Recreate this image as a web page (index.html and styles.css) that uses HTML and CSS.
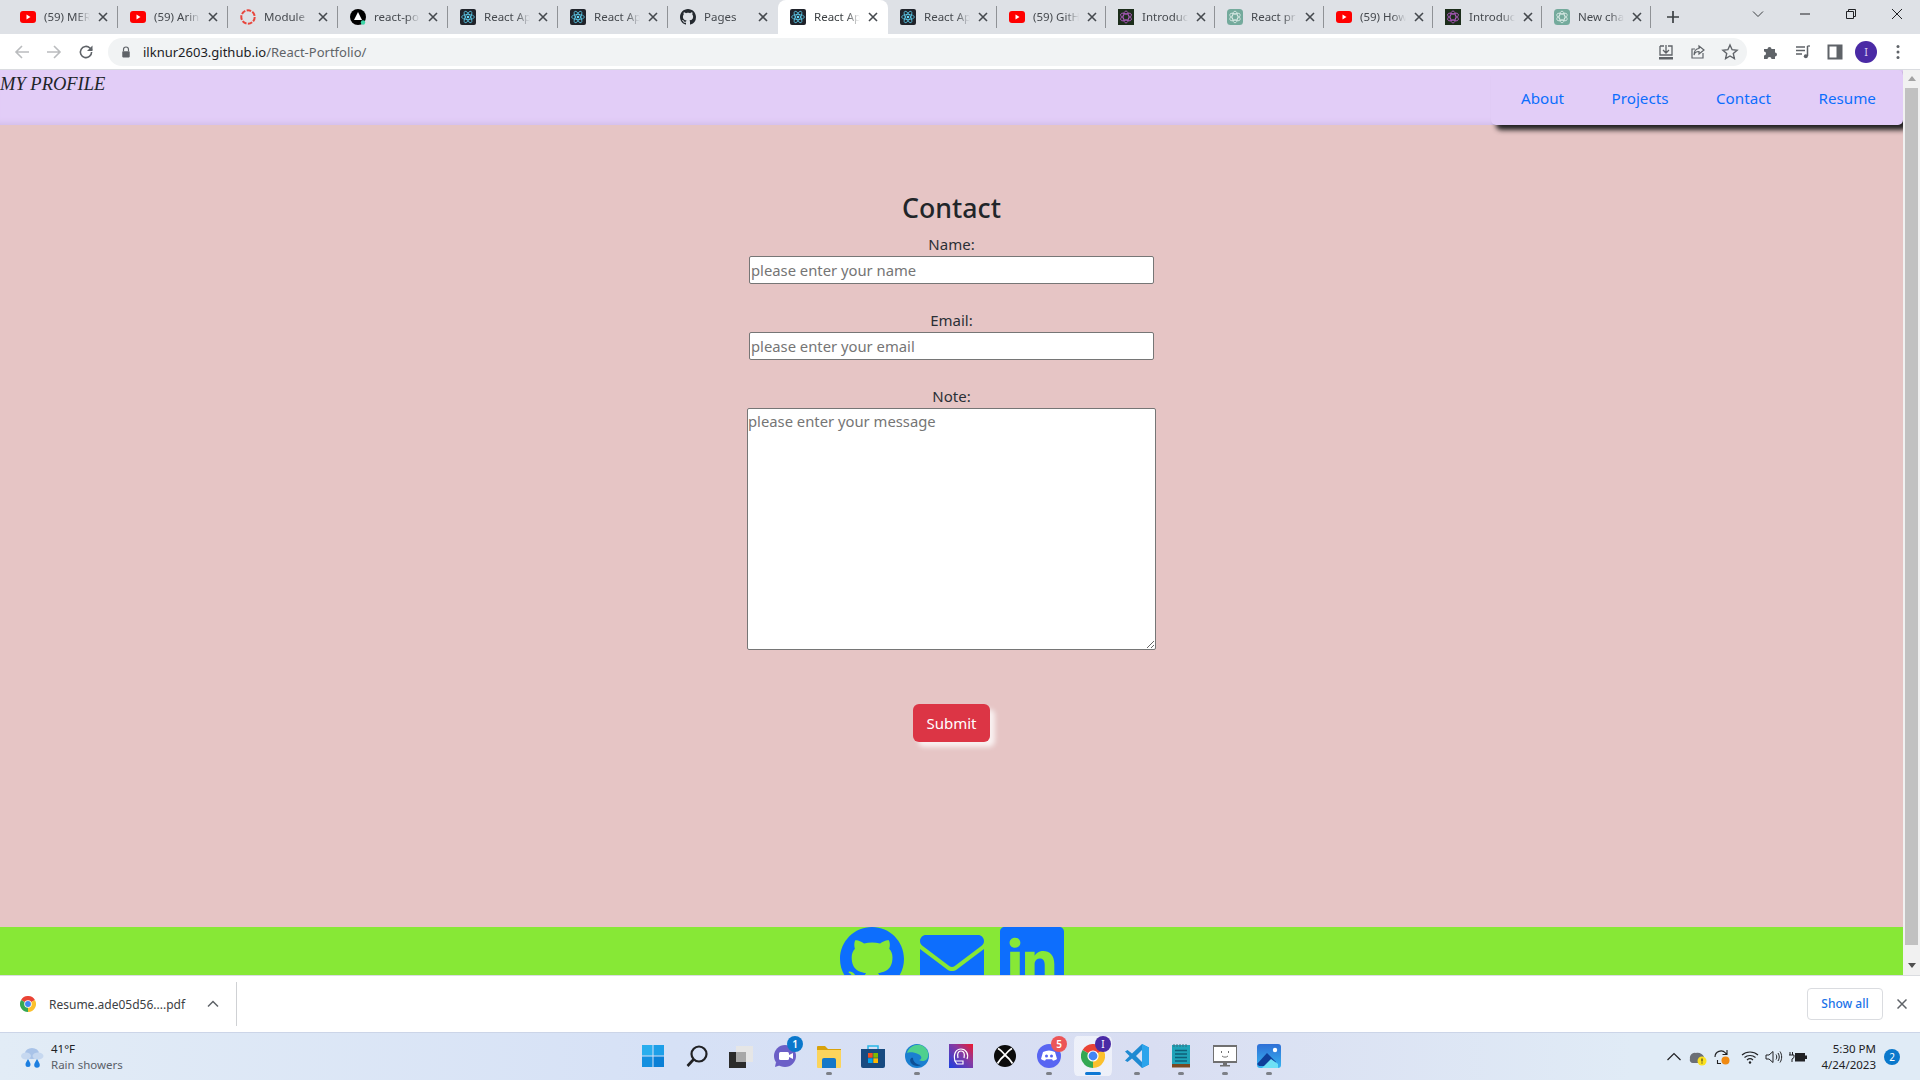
FILE: index.html
```html
<!DOCTYPE html>
<html lang="en">
<head>
<meta charset="utf-8">
<title>React App</title>
<link rel="stylesheet" href="styles.css">
</head>
<body>
<svg class="sprite" xmlns="http://www.w3.org/2000/svg">
  <symbol id="i-x" viewBox="0 0 10 10"><path d="M1 1l8 8M9 1L1 9" fill="none" stroke="currentColor" stroke-width="1.6"/></symbol>
  <symbol id="f-yt" viewBox="0 0 16 16"><rect y="2" width="16" height="12" rx="3" fill="#f00"/><path d="M6.5 5.5v5l4-2.5z" fill="#fff"/></symbol>
  <symbol id="f-module" viewBox="0 0 16 16"><circle cx="8" cy="8" r="6.7" fill="none" stroke="#e8453c" stroke-width="2" stroke-dasharray="4.6 1.4"/></symbol>
  <symbol id="f-render" viewBox="0 0 16 16"><circle cx="8" cy="8" r="8" fill="#000"/><path d="M8 3l4 8H4z" fill="#fff"/><circle cx="13" cy="13.5" r="2.2" fill="#3fd6a8"/></symbol>
  <symbol id="f-react" viewBox="0 0 16 16"><rect width="16" height="16" rx="2" fill="#20232a"/><g fill="none" stroke="#61dafb" stroke-width=".7"><ellipse cx="8" cy="8" rx="6.4" ry="2.5"/><ellipse cx="8" cy="8" rx="6.4" ry="2.5" transform="rotate(60 8 8)"/><ellipse cx="8" cy="8" rx="6.4" ry="2.5" transform="rotate(120 8 8)"/></g><circle cx="8" cy="8" r="1.3" fill="#61dafb"/></symbol>
  <symbol id="bi-github" viewBox="0 0 16 16"><path d="M8 0C3.58 0 0 3.58 0 8c0 3.54 2.29 6.53 5.47 7.59.4.07.55-.17.55-.38 0-.19-.01-.82-.01-1.49-2.01.37-2.53-.49-2.69-.94-.09-.23-.48-.94-.82-1.13-.28-.15-.68-.52-.01-.53.63-.01 1.08.58 1.23.82.72 1.21 1.87.87 2.33.66.07-.52.28-.87.51-1.07-1.78-.2-3.64-.89-3.64-3.95 0-.87.31-1.59.82-2.15-.08-.2-.36-1.02.08-2.12 0 0 .67-.21 2.2.82.64-.18 1.32-.27 2-.27.68 0 1.36.09 2 .27 1.53-1.04 2.2-.82 2.2-.82.44 1.1.16 1.92.08 2.12.51.56.82 1.27.82 2.15 0 3.07-1.87 3.75-3.65 3.95.29.25.54.73.54 1.48 0 1.07-.01 1.93-.01 2.2 0 .21.15.46.55.38A8.012 8.012 0 0 0 16 8c0-4.42-3.58-8-8-8z"/></symbol>
  <symbol id="f-ai" viewBox="0 0 16 16"><rect width="16" height="16" fill="#1c2d1b"/><g fill="none" stroke="#b65cc8" stroke-width=".8"><ellipse cx="8" cy="8" rx="6" ry="2.800" transform="rotate(30 8 8)"/><ellipse cx="8" cy="8" rx="6" ry="2.800" transform="rotate(90 8 8)"/><ellipse cx="8" cy="8" rx="6" ry="2.800" transform="rotate(150 8 8)"/></g></symbol>
  <symbol id="f-gpt" viewBox="0 0 16 16"><rect width="16" height="16" rx="3.500" fill="#74aa9c"/><g fill="none" stroke="#e8f3f0" stroke-width=".7"><ellipse cx="8" cy="8" rx="5.800" ry="2.800" transform="rotate(30 8 8)"/><ellipse cx="8" cy="8" rx="5.800" ry="2.800" transform="rotate(90 8 8)"/><ellipse cx="8" cy="8" rx="5.800" ry="2.800" transform="rotate(150 8 8)"/></g></symbol>
  <symbol id="chrome" viewBox="0 0 24 24"><path d="M12 12L1.6 6A12 12 0 0 1 22.4 6z" fill="#ea4335"/><path d="M12 12L22.4 6A12 12 0 0 1 12 24z" fill="#fbc02d"/><path d="M12 12L12 24A12 12 0 0 1 1.6 6z" fill="#34a853"/><circle cx="12" cy="12" r="5.6" fill="#fff"/><circle cx="12" cy="12" r="4.4" fill="#4285f4"/></symbol>
</svg>

<div class="tabstrip">
  <div class="tab"><svg class="favicon"><use href="#f-yt"/></svg><span class="tab-title">(59) MER</span><svg class="tab-x"><use href="#i-x"/></svg></div>
  <div class="tab"><svg class="favicon"><use href="#f-yt"/></svg><span class="tab-title">(59) Arin</span><svg class="tab-x"><use href="#i-x"/></svg></div>
  <div class="tab"><svg class="favicon"><use href="#f-module"/></svg><span class="tab-title">Module</span><svg class="tab-x"><use href="#i-x"/></svg></div>
  <div class="tab"><svg class="favicon"><use href="#f-render"/></svg><span class="tab-title">react-po</span><svg class="tab-x"><use href="#i-x"/></svg></div>
  <div class="tab"><svg class="favicon"><use href="#f-react"/></svg><span class="tab-title">React Ap</span><svg class="tab-x"><use href="#i-x"/></svg></div>
  <div class="tab"><svg class="favicon"><use href="#f-react"/></svg><span class="tab-title">React Ap</span><svg class="tab-x"><use href="#i-x"/></svg></div>
  <div class="tab tab-plain"><svg class="favicon fav-dark"><use href="#bi-github"/></svg><span class="tab-title">Pages</span><svg class="tab-x"><use href="#i-x"/></svg></div>
  <div class="tab tab-active"><svg class="favicon"><use href="#f-react"/></svg><span class="tab-title">React Ap</span><svg class="tab-x"><use href="#i-x"/></svg></div>
  <div class="tab tab-narrow"><svg class="favicon"><use href="#f-react"/></svg><span class="tab-title">React Ap</span><svg class="tab-x"><use href="#i-x"/></svg></div>
  <div class="tab tab-narrow"><svg class="favicon"><use href="#f-yt"/></svg><span class="tab-title">(59) GitH</span><svg class="tab-x"><use href="#i-x"/></svg></div>
  <div class="tab tab-narrow"><svg class="favicon"><use href="#f-ai"/></svg><span class="tab-title">Introduc</span><svg class="tab-x"><use href="#i-x"/></svg></div>
  <div class="tab tab-narrow"><svg class="favicon"><use href="#f-gpt"/></svg><span class="tab-title">React pr</span><svg class="tab-x"><use href="#i-x"/></svg></div>
  <div class="tab tab-narrow"><svg class="favicon"><use href="#f-yt"/></svg><span class="tab-title">(59) How</span><svg class="tab-x"><use href="#i-x"/></svg></div>
  <div class="tab tab-narrow"><svg class="favicon"><use href="#f-ai"/></svg><span class="tab-title">Introduc</span><svg class="tab-x"><use href="#i-x"/></svg></div>
  <div class="tab tab-narrow"><svg class="favicon"><use href="#f-gpt"/></svg><span class="tab-title">New cha</span><svg class="tab-x"><use href="#i-x"/></svg></div>
  <svg class="new-tab" viewBox="0 0 12 12"><path d="M6 0v12M0 6h12" fill="none" stroke="#3c4043" stroke-width="1.7"/></svg>
  <div class="window-controls">
    <svg class="win-btn win-chevron" viewBox="0 0 12 12"><path d="M1 3.5l5 5 5-5" fill="none" stroke="#3c4043" stroke-width="1"/></svg>
    <svg class="win-btn win-min" viewBox="0 0 12 12"><path d="M1 6h10" fill="none" stroke="#202124" stroke-width="1"/></svg>
    <svg class="win-btn win-max" viewBox="0 0 12 12"><path d="M1.5 3.5h7v7h-7zM3.5 3.5v-2h7v7h-2" fill="none" stroke="#202124" stroke-width="1"/></svg>
    <svg class="win-btn win-close" viewBox="0 0 12 12"><path d="M1 1l10 10M11 1L1 11" fill="none" stroke="#202124" stroke-width="1"/></svg>
  </div>
</div>

<div class="toolbar">
  <svg class="tool-icon" viewBox="0 0 16 16"><path d="M15 8H2M8 2L2 8l6 6" fill="none" stroke="#babcbe" stroke-width="1.6"/></svg>
  <svg class="tool-icon" viewBox="0 0 16 16"><path d="M1 8h13M8 2l6 6-6 6" fill="none" stroke="#babcbe" stroke-width="1.6"/></svg>
  <svg class="tool-icon" viewBox="0 0 16 16"><path d="M13.6 8a5.6 5.6 0 1 1-1.7-4L14 6" fill="none" stroke="#5f6368" stroke-width="1.6"/><path d="M14.5 1.5V7H9z" fill="#5f6368"/></svg>
  <div class="omnibox">
    <svg class="lock" viewBox="0 0 12 14"><path d="M3 6V4a3 3 0 0 1 6 0v2" fill="none" stroke="#5f6368" stroke-width="1.4"/><rect x="1.5" y="6" width="9" height="7.5" rx="1" fill="#5f6368"/></svg>
    <span class="url"><span class="url-host">ilknur2603.github.io</span>/React-Portfolio/</span>
    <div class="omni-actions">
      <svg class="omni-icon" viewBox="0 0 18 18"><path d="M3 3h4M11 3h4v9H3V3M9 2v7M6 7l3 3 3-3" fill="none" stroke="#5f6368" stroke-width="1.3"/><path d="M2 14h14v2.5H2z" fill="#5f6368"/></svg>
      <svg class="omni-icon" viewBox="0 0 18 18"><path d="M14 10v5H3V6h3M10 3l5 4-5 4V8.5C7 8.500 5.500 10 5 12c0-4 2-6.500 5-6.500z" fill="none" stroke="#5f6368" stroke-width="1.2"/></svg>
      <svg class="omni-icon" viewBox="0 0 18 18"><path d="M9 2l2.100 4.700 5 .5-3.800 3.400 1.100 5L9 13l-4.400 2.600 1.100-5L1.900 7.200l5-.5z" fill="none" stroke="#5f6368" stroke-width="1.400"/></svg>
    </div>
  </div>
  <div class="tool-right">
    <svg class="tool-icon" viewBox="0 0 16 16"><path d="M1 5h3.500a2 2 0 1 1 4 0H12v3.500a2 2 0 1 1 0 4V15H8.500a2 2 0 1 0-4 0H1v-3.500a2 2 0 1 0 0-4z" fill="#5f6368"/></svg>
    <svg class="tool-icon" viewBox="0 0 16 16"><path d="M1 3h9M1 6.500h9M1 10h6" fill="none" stroke="#5f6368" stroke-width="1.300"/><path d="M12.500 2v10" fill="none" stroke="#5f6368" stroke-width="1.500"/><path d="M12.500 2h2.500" fill="none" stroke="#5f6368" stroke-width="1.300"/><circle cx="10.800" cy="12.200" r="2" fill="#5f6368"/></svg>
    <svg class="tool-icon" viewBox="0 0 16 16"><path d="M1.500 1.500h13v13h-13z" fill="none" stroke="#5f6368" stroke-width="2"/><path d="M9.500 1.500h5v13h-5z" fill="#5f6368"/></svg>
    <span class="avatar">I</span>
    <svg class="kebab" viewBox="0 0 4 16"><circle cx="2" cy="2.500" r="1.500" fill="#5f6368"/><circle cx="2" cy="8" r="1.500" fill="#5f6368"/><circle cx="2" cy="13.500" r="1.500" fill="#5f6368"/></svg>
  </div>
</div>

<div class="viewport">
  <div class="page">
    <header class="navbar">
      <a class="brand">MY PROFILE</a>
      <nav class="nav-links">
        <a class="nav-link">About</a>
        <a class="nav-link">Projects</a>
        <a class="nav-link">Contact</a>
        <a class="nav-link">Resume</a>
      </nav>
    </header>
    <main class="content">
      <h2 class="title">Contact</h2>
      <form class="contact-form">
        <label class="field-label" for="name">Name:</label>
        <input class="field-input" id="name" type="text" placeholder="please enter your name">
        <label class="field-label" for="email">Email:</label>
        <input class="field-input" id="email" type="text" placeholder="please enter your email">
        <label class="field-label" for="note">Note:</label>
        <textarea class="field-area" id="note" placeholder="please enter your message"></textarea>
        <button class="submit" type="button">Submit</button>
      </form>
    </main>
    <footer class="footer">
      <svg class="social" viewBox="0 0 16 16"><use href="#bi-github"/></svg>
      <svg class="social" viewBox="0 0 512 512"><path d="M48 64C21.500 64 0 85.500 0 112c0 15.100 7.100 29.300 19.200 38.400L236.800 313.600c11.400 8.500 27 8.500 38.400 0L492.800 150.400c12.100-9.100 19.200-23.300 19.200-38.400c0-26.500-21.500-48-48-48H48zM0 176V384c0 35.300 28.700 64 64 64H448c35.300 0 64-28.700 64-64V176L294.400 339.200c-22.800 17.100-54 17.100-76.800 0L0 176z"/></svg>
      <svg class="social" viewBox="0 0 16 16"><path d="M0 1.146C0 .513.526 0 1.175 0h13.650C15.474 0 16 .513 16 1.146v13.708c0 .633-.526 1.146-1.175 1.146H1.175C.526 16 0 15.487 0 14.854V1.146zm4.943 12.248V6.169H2.542v7.225h2.401zm-1.200-8.212c.837 0 1.358-.554 1.358-1.248-.015-.709-.52-1.248-1.342-1.248-.822 0-1.359.54-1.359 1.248 0 .694.521 1.248 1.327 1.248h.016zm4.908 8.212V9.359c0-.216.016-.432.08-.586.173-.431.568-.878 1.232-.878.869 0 1.216.662 1.216 1.634v3.865h2.401V9.250c0-2.220-1.184-3.252-2.764-3.252-1.274 0-1.845.7-2.165 1.193v.025h-.016a5.540 5.540 0 0 1 .016-.025V6.169h-2.400c.03.678 0 7.225 0 7.225h2.400z"/></svg>
    </footer>
  </div>
  <div class="scrollbar">
    <span class="arrow-up"></span>
    <span class="thumb"></span>
    <span class="arrow-down"></span>
  </div>
</div>

<div class="download-bar">
  <svg class="dl-icon"><use href="#chrome"/></svg>
  <span class="dl-name">Resume.ade05d56....pdf</span>
  <svg class="dl-chevron" viewBox="0 0 12 8"><path d="M1 6.500l5-5 5 5" fill="none" stroke="#5f6368" stroke-width="1.500"/></svg>
  <span class="dl-divider"></span>
  <span class="dl-spacer"></span>
  <span class="show-all">Show all</span>
  <svg class="dl-close" viewBox="0 0 10 10"><path d="M.5.5l9 9M9.500.5l-9 9" fill="none" stroke="#5f6368" stroke-width="1.500"/></svg>
</div>

<div class="taskbar">
  <div class="weather">
    <svg class="weather-icon" viewBox="0 0 24 24"><ellipse cx="12" cy="8.500" rx="7" ry="5.500" fill="#a9c3e8"/><ellipse cx="6" cy="11" rx="5" ry="3.500" fill="#c6d8f0"/><ellipse cx="18" cy="11" rx="5.500" ry="3.500" fill="#c6d8f0"/><path d="M8 14c1.500 2.500 2.500 4 2.500 5.500a2.500 2.500 0 0 1-5 0C5.500 18 6.500 16.500 8 14zM17 14c1.500 2.500 2.800 4.500 2.800 6a2.800 2.800 0 0 1-5.600 0c0-1.500 1.300-3.500 2.800-6z" fill="#1c7fe0"/></svg>
    <div class="weather-text">
      <span class="temp">41°F</span>
      <span class="cond">Rain showers</span>
    </div>
  </div>
  <div class="apps">
    <div class="app"><svg class="app-icon" viewBox="0 0 24 24"><path d="M1 1h10.500v10.500H1z" fill="#29aeee"/><path d="M12.500 1H23v10.500H12.500z" fill="#1d9fe8"/><path d="M1 12.500h10.500V23H1z" fill="#1490e0"/><path d="M12.500 12.500H23V23H12.500z" fill="#0b80d6"/></svg></div>
    <div class="app"><svg class="app-icon" viewBox="0 0 24 24"><circle cx="14" cy="10" r="7.500" fill="none" stroke="#202124" stroke-width="2.200"/><path d="M8.500 15.500L2.500 22" fill="none" stroke="#202124" stroke-width="2.600"/></svg></div>
    <div class="app"><svg class="app-icon" viewBox="0 0 24 24"><rect x="7" y="2" width="17" height="16" fill="#e6e6e6"/><rect x="0" y="8" width="17" height="16" fill="#2b2b2b"/><rect x="7" y="8" width="10" height="10" fill="#a8a8a8"/></svg></div>
    <div class="app"><svg class="app-icon" viewBox="0 0 24 24"><circle cx="12" cy="12" r="11" fill="#6b5fc7"/><path d="M3 18l-1 5 6-2z" fill="#6b5fc7"/><rect x="6" y="8" width="10" height="8" rx="1.500" fill="#fff"/><path d="M16 11l4-2v6l-4-2z" fill="#fff"/></svg><span class="badge badge-blue">1</span></div>
    <div class="app"><svg class="app-icon" viewBox="0 0 24 24"><path d="M0 3a1 1 0 0 1 1-1h7l3 3h13v17H0z" fill="#d9a20b"/><path d="M0 6h24v17a1 1 0 0 1-1 1H1a1 1 0 0 1-1-1z" fill="#fbd45c"/><path d="M5 16a2 2 0 0 1 2-2h10a2 2 0 0 1 2 2v8H5z" fill="#1477c8"/></svg><span class="dot"></span></div>
    <div class="app"><svg class="app-icon" viewBox="0 0 24 24"><path d="M7 5V2h10v3" fill="none" stroke="#29b6e8" stroke-width="1.500"/><path d="M0 5h24v17a2 2 0 0 1-2 2H2a2 2 0 0 1-2-2z" fill="#174a80"/><path d="M7 9h4.700v4.700H7z" fill="#f25022"/><path d="M12.300 9H17v4.700h-4.700z" fill="#7fba00"/><path d="M7 14.300h4.700V19H7z" fill="#00a4ef"/><path d="M12.300 14.300H17V19h-4.700z" fill="#ffb900"/></svg></div>
    <div class="app"><svg class="app-icon" viewBox="0 0 24 24"><circle cx="12" cy="12" r="12" fill="#1b7fd0"/><path d="M2 9C4 2 12-1 18 2c5 3 7 9 4 13-2 2.500-6 2.500-8 1 3-.5 3.500-4-1-6C9 8 4 8 2 9z" fill="#4fd08e"/><path d="M8 14c0 4 4 7 8 7-3 2-8 1-10-2s0-6 2-5z" fill="#0c4f96"/></svg><span class="dot"></span></div>
    <div class="app"><svg class="app-icon" viewBox="0 0 24 24"><defs><linearGradient id="g-app" x1="0" y1="1" x2="1" y2="0"><stop offset="0" stop-color="#1a3fe0"/><stop offset=".6" stop-color="#8a3aa0"/><stop offset="1" stop-color="#f0182c"/></linearGradient></defs><rect width="24" height="24" fill="url(#g-app)"/><g fill="none" stroke="#fff" stroke-width="1.200"><path d="M6 17c-2-7 1-12 6-12s8 5 6 10"/><path d="M9 14c-1-4 0-7 3-7s4 3 3 7"/><path d="M6 17h8v3H8z"/></g></svg></div>
    <div class="app"><svg class="app-icon" viewBox="0 0 24 24"><circle cx="12" cy="12" r="11" fill="#0b0b0b"/><path d="M5 4.500c3 1.500 5 4 7 6.500 2-2.500 4-5 7-6.500M4.500 19.500c2-3.500 5-6.500 7.500-8.500 2.500 2 5.500 5 7.500 8.500" fill="none" stroke="#fff" stroke-width="1.800"/></svg></div>
    <div class="app"><svg class="app-icon" viewBox="0 0 24 24"><circle cx="12" cy="12" r="12" fill="#5865f2"/><path d="M6 8c4-2 8-2 12 0l2 7c-1.500 1-3 1.500-4 1.700l-1-1.500h-6l-1 1.500C7 16.500 5.500 16 4 15z" fill="#fff"/><circle cx="9.500" cy="12" r="1.500" fill="#5865f2"/><circle cx="14.500" cy="12" r="1.500" fill="#5865f2"/></svg><span class="dot"></span><span class="badge badge-red">5</span></div>
    <div class="app app-active"><svg class="app-icon"><use href="#chrome"/></svg><span class="bar"></span><span class="badge badge-purple">I</span></div>
    <div class="app"><svg class="app-icon" viewBox="0 0 24 24"><path d="M17 0l7 3.500v17L17 24 7 14.500 2.500 18 0 16.500 4.500 12 0 7.500 2.500 6 7 9.500z" fill="#1f8ad2"/><path d="M17 6l-6 6 6 6z" fill="#d9e2f6"/><path d="M17 0l7 3.500v17L17 24z" fill="#2ba4ec"/></svg><span class="dot"></span></div>
    <div class="app"><svg class="app-icon" viewBox="0 0 24 24"><path d="M3 1h18v19H3z" fill="#1fa3b8"/><path d="M3 20h18v3.500H3z" fill="#7a4a22"/><path d="M6 6.500h12M6 10h12M6 13.500h12M6 17h12" fill="none" stroke="#0f5f78" stroke-width="1.500"/><path d="M5 0v3M8 0v3M11 0v3M14 0v3M17 0v3" fill="none" stroke="#3a6f80" stroke-width="1"/></svg><span class="dot"></span></div>
    <div class="app"><svg class="app-icon" viewBox="0 0 24 24"><rect y="2" width="24" height="16" fill="#fff" stroke="#707070" stroke-width="2"/><path d="M10 18h4v3h-4zM7 21h10v1.500H7z" fill="#707070"/><path d="M8.500 7v2M15.500 7v2M9 12c1.500 1.500 4.500 1.500 6 0" fill="none" stroke="#707070"/></svg><span class="dot"></span></div>
    <div class="app"><svg class="app-icon" viewBox="0 0 24 24"><defs><linearGradient id="g-ph" x1="0" y1="0" x2="0" y2="1"><stop offset="0" stop-color="#2f6fd6"/><stop offset="1" stop-color="#36b4f0"/></linearGradient></defs><rect width="24" height="24" rx="3" fill="url(#g-ph)"/><circle cx="18" cy="6" r="2.200" fill="#fff"/><path d="M0 20L10 9l9 9-2 4H2z" fill="#0f3f9a"/><path d="M5 24l9-9 7 5v4z" fill="#6fe0f5"/></svg><span class="dot"></span></div>
  </div>
  <div class="tray">
    <svg class="tray-icon" viewBox="0 0 18 18"><path d="M2.500 12l6.500-6.500 6.500 6.500" fill="none" stroke="#202124" stroke-width="1.200"/></svg>
    <svg class="tray-icon" viewBox="0 0 18 18"><path d="M1 11a5 5 0 0 1 6-6c3-1 7 1 8 4l-2 6H4a3 3 0 0 1-3-4z" fill="#6b6f76"/><circle cx="13" cy="13" r="4.500" fill="#fbe11f"/><path d="M13 10.500v3M13 14.500v1" stroke="#202124" stroke-width="1"/></svg>
    <svg class="tray-icon tray-gap" viewBox="0 0 18 18"><path d="M2 9a6 6 0 0 1 10.500-4l1.500 1.500M14 2v4.500H9.500M8 15.500H4.500M4.500 12v4" fill="none" stroke="#202124" stroke-width="1.100"/><circle cx="12.500" cy="12.500" r="4" fill="#f08a12"/></svg>
    <svg class="tray-icon" viewBox="0 0 18 18"><path d="M1 7c4.500-4 11.500-4 16 0M3.500 9.500c3-2.700 8-2.700 11 0M6 12c1.700-1.500 4.300-1.500 6 0" fill="none" stroke="#202124" stroke-width="1.100"/><circle cx="9" cy="14.500" r="1.200" fill="#202124"/></svg>
    <svg class="tray-icon" viewBox="0 0 18 18"><path d="M1 7h3l4-3.500v11L4 11H1zM11 6.500c1 1.500 1 3.500 0 5M13 5c1.700 2.500 1.700 5.500 0 8M15 3.500c2.200 3.300 2.200 7.700 0 11" fill="none" stroke="#202124" stroke-width="1"/></svg>
    <svg class="tray-icon" viewBox="0 0 18 18"><path d="M1 4v3M3.500 4v3M0 7h5v2.500L3 11v3" fill="none" stroke="#202124" stroke-width="1"/><rect x="6" y="5" width="10" height="8.500" fill="#202124"/><rect x="16" y="7.500" width="2" height="3.500" fill="#202124"/></svg>
    <div class="clock"><span>5:30 PM</span><span>4/24/2023</span></div>
    <span class="notify">2</span>
  </div>
</div>
</body>
</html>
```

FILE: styles.css
```css
* { box-sizing: border-box; }
html, body { margin: 0; height: 100%; overflow: hidden; }
body {
  display: flex;
  flex-direction: column;
  height: 1080px;
  font-family: "Noto Sans", "Open Sans", sans-serif;
  background: #fff;
}
.sprite { display: none; }

/* tab strip */
.tabstrip {
  height: 34px;
  flex: none;
  display: flex;
  align-items: stretch;
  background: #dee1e6;
  padding-left: 8px;
  color: #45494e;
}
.tab {
  width: 110px;
  flex: none;
  display: flex;
  align-items: center;
  padding: 0 10px 0 12px;
  border-right: 1px solid #8f9296;
  border-image: linear-gradient(to bottom, transparent 7px, #8f9296 7px, #8f9296 27px, transparent 27px) 1;
}
.tab-narrow { width: 109px; }
.tab-plain, .tab-active { border-image: none; border-right: 1px solid transparent; }
.tab-active {
  background: #fff;
  border-radius: 8px 8px 0 0;
  color: #3c4043;
}
.favicon { width: 16px; height: 16px; flex: none; }
.fav-dark { fill: #24292f; }
.tab-title {
  margin-left: 8px;
  width: 46px;
  flex: none;
  white-space: nowrap;
  font-size: 11.5px;
  line-height: 16px;
  -webkit-mask-image: linear-gradient(to right, #000 70%, transparent 100%);
  mask-image: linear-gradient(to right, #000 70%, transparent 100%);
}
.tab-x { width: 10px; height: 10px; margin-left: 8px; flex: none; color: #45494e; }
.new-tab { width: 12px; height: 12px; margin: 11px 0 0 16px; flex: none; }
.window-controls { margin-left: auto; display: flex; align-items: flex-start; }
.win-btn { width: 12px; height: 12px; margin-top: 8px; flex: none; }
.win-chevron { margin-right: 35px; }
.win-min { margin-right: 34px; }
.win-max { margin-right: 34px; }
.win-close { margin-right: 17px; }

/* toolbar */
.toolbar {
  height: 36px;
  flex: none;
  display: flex;
  align-items: center;
  padding-left: 14px;
  background: #fff;
  border-bottom: 1px solid #dadce0;
}
.tool-icon { width: 16px; height: 16px; flex: none; margin-right: 16px; }
.omnibox {
  width: 1639px;
  margin-left: -2px;
  height: 28px;
  flex: none;
  display: flex;
  align-items: center;
  padding-left: 13px;
  background: #f1f3f4;
  border-radius: 14px;
}
.lock { width: 10px; height: 12px; flex: none; }
.url { margin-left: 12px; font-size: 13px; color: #5f6368; white-space: nowrap; }
.url-host { color: #202124; }
.omni-actions { margin-left: auto; display: flex; gap: 14px; padding-right: 8px; }
.omni-icon { width: 18px; height: 18px; flex: none; }
.tool-right { display: flex; align-items: center; margin-left: 16px; }
.avatar {
  width: 22px;
  height: 22px;
  margin-left: -4px;
  border-radius: 50%;
  background: #4a2aa5;
  color: #d9d0f0;
  font-size: 11px;
  line-height: 22px;
  text-align: center;
}
.kebab { width: 4px; height: 16px; margin-left: 19px; flex: none; }

/* page */
.viewport { height: 905px; flex: none; display: flex; }
.page {
  flex: 1;
  min-width: 0;
  display: flex;
  flex-direction: column;
  background: #e6c5c5;
  color: #212529;
}
.navbar {
  height: 55px;
  flex: none;
  display: flex;
  justify-content: space-between;
  background: #e2cdf7;
  box-shadow: inset 0 -7px 6px -6px #cdb9e6;
  position: relative;
  z-index: 1;
}
.brand {
  font-family: "Liberation Serif", serif;
  font-style: italic;
  font-size: 18.5px;
  line-height: 29px;
  color: #212529;
}
.nav-links {
  display: flex;
  align-items: center;
  width: 412px;
  padding: 0 0 0 30px;
  background: #e2cdf7;
  border-radius: 5px;
  box-shadow: 5px 5px 5px #222;
}
.nav-link { font-size: 15.2px; line-height: 24px; color: #0d6efd; margin-right: 47.500px; white-space: nowrap; }
.nav-link:last-child { margin-right: 0; }

.content { flex: 1; min-height: 0; padding-top: 64px; }
.title {
  margin: 0;
  font-size: 26.7px;
  line-height: 38px;
  font-weight: 500;
  text-align: center;
  color: #212529;
}
.contact-form {
  margin-top: 6px;
  display: flex;
  flex-direction: column;
  align-items: center;
}
.field-label { font-size: 15px; line-height: 23px; color: #2b3036; }
.field-input {
  width: 405px;
  height: 28px;
  margin-bottom: 25px;
  padding: 1px 1px;
  border: 1px solid #767676;
  border-radius: 2px;
  background: #fff;
  font-family: inherit;
  font-size: 14.8px;
}
.field-area {
  width: 409px;
  height: 242px;
  margin-bottom: 54px;
  padding: 2px 1px 1px 0;
  border: 1px solid #767676;
  border-radius: 2px;
  background: #fff;
  font-family: inherit;
  font-size: 14.8px;
}
.field-input::placeholder, .field-area::placeholder { color: #757575; opacity: 1; }
.submit {
  width: 77px;
  height: 38px;
  padding: 0;
  border: 0;
  border-radius: 6px;
  background: #dc3545;
  color: #fff;
  font-family: inherit;
  font-size: 15px;
  box-shadow: 5px 5px 5px rgba(255, 255, 255, .75);
}

.footer {
  height: 48px;
  flex: none;
  overflow: hidden;
  display: flex;
  justify-content: center;
  align-items: flex-start;
  gap: 16px;
  background: #87e836;
}
.social { width: 64px; height: 64px; flex: none; fill: #0d6efd; }

.scrollbar {
  width: 17px;
  flex: none;
  display: flex;
  flex-direction: column;
  align-items: center;
  background: #f1f1f1;
  position: relative;
  z-index: 2;
}
.arrow-up, .arrow-down { width: 0; height: 0; flex: none; border-left: 4px solid transparent; border-right: 4px solid transparent; }
.arrow-up { margin-top: 6px; border-bottom: 5px solid #a3a3a3; }
.arrow-down { margin-top: 18px; border-top: 5px solid #505050; }
.thumb { width: 13px; height: 857px; margin-top: 7px; background: #c1c1c1; }

/* download bar */
.download-bar {
  height: 57px;
  flex: none;
  display: flex;
  align-items: center;
  padding: 0 13px 0 20px;
  background: #fff;
  border-top: 1px solid #dadce0;
}
.dl-icon { width: 16px; height: 16px; flex: none; }
.dl-name { margin-left: 13px; width: 138px; font-size: 12px; color: #3c4043; white-space: nowrap; }
.dl-chevron { width: 12px; height: 8px; margin-left: 20px; flex: none; }
.dl-divider { width: 1px; height: 44px; margin-left: 17px; background: #cfd1d4; }
.dl-spacer { flex: 1; }
.show-all {
  width: 76px;
  height: 32px;
  border: 1px solid #dadce0;
  border-radius: 4px;
  color: #1a73e8;
  font-size: 12px;
  font-weight: 500;
  line-height: 30px;
  text-align: center;
}
.dl-close { width: 10px; height: 10px; margin-left: 14px; flex: none; }

/* taskbar */
.taskbar {
  height: 48px;
  flex: none;
  display: grid;
  grid-template-columns: 631px auto 1fr;
  align-items: center;
  border-top: 1px solid #ccd5e8;
  background: linear-gradient(to right, #e2ecf6, #d6e1f6 35%, #d9def2 60%, #e0ebf6 85%);
  color: #202124;
}
.weather { display: flex; align-items: center; padding-left: 20px; }
.weather-icon { width: 24px; height: 24px; flex: none; }
.weather-text { display: flex; flex-direction: column; margin-left: 7px; font-size: 11.5px; line-height: 16px; }
.cond { color: #5a6068; }
.apps { display: flex; margin-bottom: 2px; }
.app {
  width: 44px;
  height: 40px;
  flex: none;
  display: flex;
  align-items: center;
  justify-content: center;
  position: relative;
}
.app-icon { width: 24px; height: 24px; flex: none; }
.app-active {
  border-left: 3px solid transparent;
  border-right: 3px solid transparent;
  background: rgba(255, 255, 255, .55);
  background-clip: padding-box;
  border-radius: 6px;
}
.dot, .bar { position: absolute; left: 50%; transform: translateX(-50%); bottom: 1px; }
.dot { width: 6px; height: 3px; border-radius: 2px; background: #7d8087; }
.bar { width: 16px; height: 3px; border-radius: 2px; background: #0f78d4; }
.badge {
  position: absolute;
  top: 0;
  right: 4px;
  width: 16px;
  height: 16px;
  border-radius: 50%;
  color: #fff;
  font-size: 10px;
  font-weight: 600;
  line-height: 16px;
  text-align: center;
}
.badge-blue { background: #0a78cc; }
.badge-red { background: #ec5557; }
.badge-purple { right: 1px; background: #4a2aa5; font-weight: 400; }
.tray { display: flex; align-items: center; justify-content: flex-end; padding-right: 20px; }
.tray-icon { width: 18px; height: 18px; flex: none; margin-right: 6px; }
.tray-gap { margin-right: 10px; }
.clock {
  display: flex;
  flex-direction: column;
  align-items: flex-end;
  width: 68px;
  margin-left: -5px;
  margin-right: 1px;
  font-size: 11.5px;
  line-height: 16px;
}
.notify {
  width: 16px;
  height: 16px;
  margin-left: 7px;
  border-radius: 50%;
  background: #0a78cc;
  color: #fff;
  font-size: 10px;
  line-height: 16px;
  text-align: center;
}
```
